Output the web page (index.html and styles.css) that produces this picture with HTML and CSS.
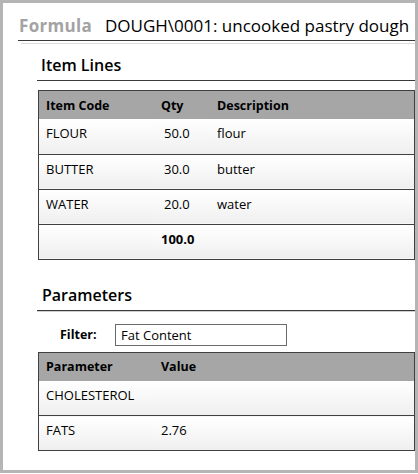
FILE: index.html
```html
<!DOCTYPE html>
<html>
<head>
<meta charset="utf-8">
<link rel="stylesheet" href="styles.css">
</head>
<body>
<div class="frame">
  <div class="title"><span class="kind">Formula</span><span class="name">DOUGH\0001: uncooked pastry dough</span></div>
  <div class="title-rule"></div>

  <div class="section">
    <div class="heading">Item Lines</div>
    <table class="grid items">
      <thead>
        <tr><th class="c1">Item Code</th><th class="c2">Qty</th><th>Description</th></tr>
      </thead>
      <tbody>
        <tr><td>FLOUR</td><td class="num">50.0</td><td>flour</td></tr>
        <tr><td>BUTTER</td><td class="num">30.0</td><td>butter</td></tr>
        <tr><td>WATER</td><td class="num">20.0</td><td>water</td></tr>
        <tr class="total"><td></td><td class="sum">100.0</td><td></td></tr>
      </tbody>
    </table>
  </div>

  <div class="section params">
    <div class="heading heading-params">Parameters</div>
    <div class="filter">
      <span class="filter-label">Filter:</span>
      <div class="filter-input">Fat Content</div>
    </div>
    <table class="grid">
      <thead>
        <tr><th class="c1">Parameter</th><th>Value</th></tr>
      </thead>
      <tbody>
        <tr><td>CHOLESTEROL</td><td></td></tr>
        <tr><td>FATS</td><td>2.76</td></tr>
      </tbody>
    </table>
  </div>
</div>
</body>
</html>
```

FILE: styles.css
```css
html, body {
  margin: 0;
  padding: 0;
  background: #ffffff;
}

body {
  font-family: "Open Sans", "Noto Sans", sans-serif;
  color: #000;
}

.frame {
  width: 418px;
  height: 473px;
  box-sizing: border-box;
  border: 3px solid #b5b5b5;
  overflow: hidden;
  padding-top: 13px;
  background: #fff;
}

.title {
  margin-left: 15px;
  padding-left: 1px;
  font-size: 17px;
  line-height: 20px;
  padding-bottom: 4px;
  border-bottom: 1px solid #3a3a3a;
  white-space: nowrap;
}

.kind {
  color: #a3a3a3;
  font-weight: 700;
  letter-spacing: 0.3px;
  margin-right: 13px;
}

.name {
  font-weight: 500;
}

.title-rule {
  margin-left: 18px;
  margin-top: 2px;
  border-top: 1px solid #dcdcdc;
}

.section {
  margin-left: 35px;
  margin-top: 11px;
}

.section.params {
  margin-top: 25px;
}

.heading {
  margin-left: -1px;
  padding-left: 4px;
  font-size: 16px;
  font-weight: 600;
  line-height: 20px;
  padding-bottom: 5px;
  border-bottom: 1px solid #3a3a3a;
}

.heading-params {
  padding-left: 5px;
  box-shadow: 0 1px 0 #cfcfcf;
}

.grid {
  margin-top: 9px;
  width: 100%;
  border-collapse: collapse;
  border: 1px solid #404040;
  font-size: 13px;
}

.grid th {
  background: #a6a6a6;
  height: 28px;
  padding: 0 0 0 7px;
  text-align: left;
  font-size: 12.5px;
  font-weight: 700;
  vertical-align: middle;
}

.grid th.c1 {
  width: 108px;
}

.grid th.c2 {
  width: 49px;
}

.grid td {
  height: 35px;
  padding: 6px 0 0 7px;
  box-sizing: border-box;
  vertical-align: top;
  line-height: 16px;
  border-bottom: 1px solid #404040;
  background: linear-gradient(#ffffff, #efefef);
}

.grid td.num {
  padding-left: 10px;
}

.grid td.sum {
  font-weight: 700;
}

.filter {
  display: flex;
  align-items: center;
  margin-top: 13px;
  padding-left: 22px;
}

.filter-label {
  font-size: 12.5px;
  font-weight: 700;
  width: 55px;
}

.filter-input {
  width: 172px;
  height: 22px;
  box-sizing: border-box;
  border: 1px solid #6a6a6a;
  padding-left: 5px;
  font-size: 13px;
  line-height: 20px;
}

.params .grid {
  margin-top: 6px;
}
```
